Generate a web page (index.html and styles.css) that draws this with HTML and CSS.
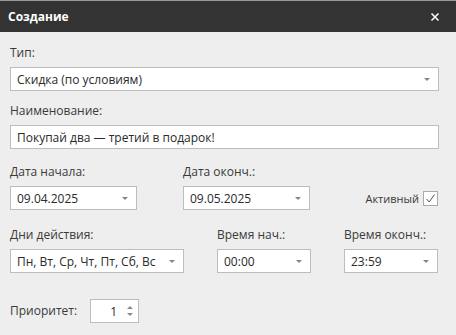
FILE: index.html
```html
<!DOCTYPE html>
<html lang="ru">
<head>
  <meta charset="UTF-8" />
  <title>Создание</title>
  <link rel="stylesheet" href="styles.css">
</head>
<body>
  <div class="dialog">
    <div class="titlebar">
      <span class="title">Создание</span>
      <svg class="close" width="10" height="10" viewBox="0 0 10 10">
        <path d="M1.5 1.5 L8.5 8.5 M8.5 1.5 L1.5 8.5" stroke="#fff" stroke-width="1.5" />
      </svg>
    </div>

    <div class="content">
      <div class="group g-type">
        <div class="label">Тип:</div>
        <div class="field select">
          <span>Скидка (по условиям)</span>
          <span class="arrow"></span>
        </div>
      </div>

      <div class="group g-name">
        <div class="label">Наименование:</div>
        <div class="field">
          <span>Покупай два — третий в подарок!</span>
        </div>
      </div>

      <div class="row g-dates">
        <div class="col w-date">
          <div class="label">Дата начала:</div>
          <div class="field select"><span>09.04.2025</span><span class="arrow"></span></div>
        </div>
        <div class="col w-date">
          <div class="label">Дата оконч.:</div>
          <div class="field select"><span>09.05.2025</span><span class="arrow"></span></div>
        </div>
        <div class="active">
          <span>Активный</span>
          <span class="checkbox">
            <svg width="11" height="11" viewBox="0 0 11 11">
              <path d="M1.5 6 L4.2 9 L9.5 1.5" stroke="#555" stroke-width="1" fill="none" />
            </svg>
          </span>
        </div>
      </div>

      <div class="row g-days">
        <div class="col w-days">
          <div class="label">Дни действия:</div>
          <div class="field select"><span>Пн, Вт, Ср, Чт, Пт, Сб, Вс</span><span class="arrow"></span></div>
        </div>
        <div class="col w-time">
          <div class="label">Время нач.:</div>
          <div class="field select"><span>00:00</span><span class="arrow"></span></div>
        </div>
        <div class="col w-time">
          <div class="label">Время оконч.:</div>
          <div class="field select"><span>23:59</span><span class="arrow"></span></div>
        </div>
      </div>

      <div class="priority">
        <span class="label">Приоритет:</span>
        <div class="field spinner">
          <span class="num">1</span>
          <span class="spin">
            <span class="up"></span>
            <span class="down"></span>
          </span>
        </div>
      </div>
    </div>
  </div>
</body>
</html>
```

FILE: styles.css
```css
body {
  margin: 0;
  font-family: "Open Sans", "Noto Sans", sans-serif;
  font-size: 12px;
  color: #333;
  background: #eeeeee;
}

.dialog {
  width: 456px;
  height: 335px;
  background: #eeeeee;
}

.titlebar {
  height: 31px;
  border-top: 1px solid #9a9a9a;
  background: #333333;
  display: flex;
  align-items: center;
  justify-content: space-between;
  padding: 0 16px 0 8px;
}

.title {
  color: #fff;
  font-weight: 700;
  font-size: 12px;
}

.close {
  display: block;
}

.content {
  padding: 0 17px 0 10px;
}

.label {
  height: 18px;
  line-height: 18px;
  margin-bottom: 5px;
  color: #3a3a3a;
}

.field {
  height: 24px;
  box-sizing: border-box;
  border: 1px solid #bdbdbd;
  background: #fff;
  display: flex;
  align-items: center;
  padding: 0 6px;
  color: #2a2a2a;
  white-space: nowrap;
}

.select span:first-child {
  flex: 1;
}

.arrow {
  width: 0;
  height: 0;
  border-left: 3.5px solid transparent;
  border-right: 3.5px solid transparent;
  border-top: 3px solid #858585;
  margin-right: 2px;
}

.g-type { padding-top: 12px; }
.g-name { margin-top: 11px; }
.g-dates { margin-top: 14px; }
.g-days { margin-top: 16px; }

.row {
  display: flex;
  align-items: flex-end;
}

.w-date { width: 127px; }
.w-date + .w-date { margin-left: 46px; }

.w-days { width: 174px; }
.w-time { width: 94px; margin-left: 33px; }

.active {
  margin-left: auto;
  margin-right: 1px;
  height: 24px;
  display: flex;
  align-items: center;
  gap: 4px;
  color: #3a3a3a;
  font-size: 11px;
}

.checkbox {
  width: 15px;
  height: 15px;
  box-sizing: border-box;
  border: 1px solid #aaa;
  background: #fff;
  display: flex;
  align-items: center;
  justify-content: center;
}

.checkbox svg { display: block; }

.priority {
  margin-top: 26px;
  display: flex;
  align-items: center;
}

.priority .label {
  margin: 0 13px 0 0;
}

.spinner {
  width: 49px;
  padding: 0 5px 0 6px;
}

.num {
  flex: 1;
  text-align: right;
  padding-right: 10px;
}

.spin {
  display: flex;
  flex-direction: column;
  gap: 4px;
}

.up, .down {
  width: 0;
  height: 0;
  border-left: 3px solid transparent;
  border-right: 3px solid transparent;
}

.up { border-bottom: 3px solid #8a8a8a; }
.down { border-top: 3px solid #8a8a8a; }
```
